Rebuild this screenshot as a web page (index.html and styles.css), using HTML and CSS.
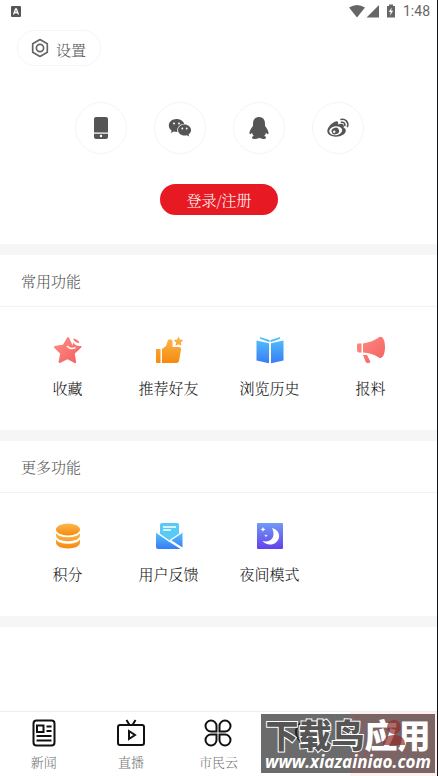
FILE: index.html
```html
<!DOCTYPE html>
<html lang="zh-CN">
<head>
<meta charset="utf-8">
<meta name="viewport" content="width=device-width, initial-scale=1">
<title>我的</title>
<link rel="stylesheet" href="styles.css">
</head>
<body>
<div class="app">
  <header class="status">
    <svg width="10" height="11" viewBox="0 0 10 11"><rect width="10" height="11" rx="1" fill="#555"/><path d="M2.5 8.500 4.600 3h.8l2.100 5.500M3.500 6.500h3" fill="none" stroke="#fff" stroke-width="1.300"/></svg>
    <div class="status-right">
      <svg width="48" height="14" viewBox="0 0 48 14" fill="#666"><path d="M0 3.500Q8 -1.500 16 3.500L8 13.500zM17.500 13.500 30 1v12.500zM38 2h2V.5h4V2h2v11.500h-8z"/><path d="m42.700 3.500-3 4.500h2l-.8 3.800 3.300-5h-2z" fill="#fff"/></svg>
      <span>1:48</span>
    </div>
  </header>
  <main>
    <section class="profile">
      <button class="settings" type="button">
        <svg width="18" height="20" viewBox="0 0 18 20" fill="none" stroke="#666" stroke-width="1.700" stroke-linejoin="round"><path d="m9 1.500 7.300 4.300v8.400L9 18.500l-7.300-4.300V5.800z"/><circle cx="9" cy="10" r="3.600"/></svg>
        <span>设置</span>
      </button>
      <div class="logins">
        <button type="button" aria-label="手机"><svg width="24" height="24" viewBox="0 0 24 24" fill="#555"><path d="M7 1h10q2 0 2 2v13.500H5V3q0-2 2-2zM5 17.700h14V21q0 2-2 2H7q-2 0-2-2z"/><circle cx="12" cy="20" r="1.200" fill="#fff"/></svg></button>
        <button type="button" aria-label="微信"><svg width="24" height="24" viewBox="0 0 24 24" fill="#555"><path d="M8.500 3C4 3 .8 5.900.8 9.500c0 2 1 3.800 2.800 5l-.7 2.500 2.900-1.500q1.700.5 3.500.4A6.500 6.500 0 0 1 16.300 8C15.500 5.200 12.500 3 8.500 3z"/><path d="M16.500 8.500c-3.700 0-6.500 2.500-6.500 5.500s2.800 5.500 6.500 5.500q1.200 0 2.200-.3l2.500 1.400-.6-2.200c1.500-1 2.500-2.600 2.500-4.400 0-3-3-5.500-6.600-5.500z"/><g fill="#fff"><circle cx="6" cy="7.500" r="1"/><circle cx="11" cy="7.500" r="1"/><circle cx="14.300" cy="12.500" r=".9"/><circle cx="18.700" cy="12.500" r=".9"/></g></svg></button>
        <button type="button" aria-label="QQ"><svg width="24" height="24" viewBox="0 0 24 24" fill="#555"><path d="M12 1c-4.300 0-6 3-6 6.500v2.300c-1.500 2.200-4 5.800-3.500 7.700.4 1.300 1.500.5 2.500-.8q.4 2 1.800 3.400C5.500 20.500 5 21 5 21.700c0 1.800 5.500 1.600 7 .1 1.500 1.500 7 1.700 7-.1 0-.7-.5-1.200-1.800-1.600q1.400-1.400 1.800-3.400c1 1.300 2.100 2.100 2.500.8.500-1.900-2-5.500-3.500-7.700V7.500C18 4 16.300 1 12 1z"/></svg></button>
        <button type="button" aria-label="微博"><svg width="24" height="24" viewBox="0 0 24 24"><path fill="#555" d="M17.500 11.500c.7-1.700.4-3.200-1-3.600-1.300-.4-3 0-4.500.6.700-2.400-.3-3.600-2.300-3.100-3.800 1-8.400 5.900-8.400 9.600 0 3.600 4.200 5.700 8.500 5.700 6 0 10-3.200 10-6 0-1.700-1-2.700-2.300-3.200z"/><ellipse cx="9.700" cy="14.700" rx="6.500" ry="4.500" transform="rotate(-8 9.700 14.700)" fill="#fff"/><ellipse cx="9.300" cy="15" rx="3.800" ry="3.300" transform="rotate(-20 9.300 15)" fill="#555"/><circle cx="8.200" cy="15.800" r="1.200" fill="#fff"/><path d="M15 3.500c4-1 8 2.500 6.500 7M15.500 6.300c2.200-.4 3.800 1.300 3.300 3.200" fill="none" stroke="#555" stroke-width="1.600" stroke-linecap="round"/></svg></button>
      </div>
      <button class="login" type="button">登录/注册</button>
    </section>

    <section class="group">
      <h2>常用功能</h2>
      <div class="grid">
        <a href="#"><svg width="28" height="28" viewBox="0 0 28 28"><defs><linearGradient id="r" x1="0" y1="0" x2="1" y2="1"><stop stop-color="#ff8d85"/><stop offset="1" stop-color="#f35f5f"/></linearGradient></defs><path fill="url(#r)" stroke="url(#r)" stroke-width="2" stroke-linejoin="round" d="m14 2 3.500 7.500 9 1.200-6.800 6.500 1.400 9-7.600-4.100L5.600 26l1.600-8.600L1 11l8.700-1.400z"/><path d="M13 10q3.500 4 8.500 1.500" fill="none" stroke="#fff" stroke-width="1.500"/><path d="M17 0h11v10h-5q-5-2-6-8z" fill="#fff"/><path d="M19 2.500q5 .5 6.500 4.500-4.500 0-6.500-4.500zM19 6.500l3 3 5 .7-2 2.300-6-3z" fill="#f87470"/></svg><span>收藏</span></a>
        <a href="#"><svg width="28" height="28" viewBox="0 0 28 28"><defs><linearGradient id="o" x1="0" y1="0" x2="0" y2="1"><stop stop-color="#fdb74c"/><stop offset="1" stop-color="#f58a10"/></linearGradient></defs><path fill="url(#o)" d="M1 13h4.500v14H2q-1 0-1-1zM7 13l4-3 2-6q3-2 4.500 1v6h7q1.700.5 1.500 2.500l-2 11.500q-.4 2-2.500 2H7zM23.500.5l1.500 3 3.300.5-2.400 2.400.6 3.400-3-1.600-3 1.600.6-3.400L18.700 4l3.300-.5z"/></svg><span>推荐好友</span></a>
        <a href="#"><svg width="28" height="28" viewBox="0 0 28 28"><defs><linearGradient id="b" x1="0" y1="0" x2="0" y2="1"><stop stop-color="#54c5fb"/><stop offset="1" stop-color="#397bf6"/></linearGradient></defs><path fill="url(#b)" d="M.5 4.500 13 7.300v20L.5 24.500zM15 7.300l12.500-2.800v20L15 27.300zM4 1l9.500 3v2.200L4 2.800zM24 1l-9.500 3v2.200L24 2.800z"/></svg><span>浏览历史</span></a>
        <a href="#"><svg width="28" height="28" viewBox="0 0 28 28"><path fill="url(#r)" d="M1 7.500h3.500v9H2Q0 16.500 0 13V9q0-1.500 1-1.500zM6 7.500Q15 6 21 2c3-3 7-.5 7 9s-4 13-7 10q-6-4-15-4.500zM6 19h4l3.500 7q-3 2.500-5-.5z"/></svg><span>报料</span></a>
      </div>
    </section>

    <section class="group">
      <h2>更多功能</h2>
      <div class="grid">
        <a href="#"><svg width="28" height="28" viewBox="0 0 28 28"><g fill="url(#o)"><ellipse cx="14" cy="7.500" rx="12" ry="6"/><path d="M2 11q2 4 12 4.300Q24 15 26 11v3q-1 5-12 5.200Q3 19 2 14zM2 17.500q2 4 12 4.300 10-.3 12-4.300v3.700q-1 5-12 5.300-11-.3-12-5.300z"/></g></svg><span>积分</span></a>
        <a href="#"><svg width="28" height="28" viewBox="0 0 28 28"><path fill="#59caf6" d="M7 1h15q2 0 2 2v10l-9 6L5 12V3q0-2 2-2z"/><path d="M8 5h13M8 8h8" stroke="#fff" stroke-width="1.500"/><path fill="url(#b)" d="m1 10 13 9 12 8H3q-2 0-2-2zM27.500 10v15.500L16 18z"/><path d="m1 10 13 9 13 8M27.500 10 15 18.500" fill="none" stroke="#fff" stroke-width="1.300"/></svg><span>用户反馈</span></a>
        <a href="#"><svg width="28" height="28" viewBox="0 0 28 28"><defs><linearGradient id="p" x1="0" y1="0" x2="0" y2="1"><stop stop-color="#6f9bf3"/><stop offset="1" stop-color="#6540ed"/></linearGradient></defs><rect x="1" y="1" width="26" height="26" rx="1" fill="url(#p)"/><path fill="#fff" d="M16 6c8 2 9 10 4.500 14s-11 3-14-1c8 2 14-4 9.500-13zM7 5l.7 1.500L9.500 7.500l-1.800.7L7 10l-.7-1.800-1.800-.7 1.800-1zM10 12l.5 1.200 1.300.6-1.300.5L10 15.500l-.5-1.200-1.300-.5 1.300-.6z"/></svg><span>夜间模式</span></a>
      </div>
    </section>
    <div class="band"></div>
  </main>

  <nav class="tabs">
    <a href="#"><svg width="28" height="28" viewBox="0 0 28 28" fill="none" stroke="#111" stroke-width="2"><rect x="3.500" y="1.500" width="21" height="25" rx="3"/><path d="M7 6.500h6.500v6.500H7zM16.500 7.500h5M16.500 12h5M6.500 17h15M6.500 21.500h15"/></svg><span>新闻</span></a>
    <a href="#"><svg width="28" height="28" viewBox="0 0 28 28" fill="none" stroke="#111" stroke-width="2"><rect x="1" y="6" width="26" height="20" rx="2"/><path d="m9.500 1 3 5M18.500 1l-3 5M12 12v8l6-4z"/></svg><span>直播</span></a>
    <a href="#"><svg width="28" height="28" viewBox="0 0 28 28" fill="none" stroke="#111" stroke-width="2"><path d="M12.500 12.500H7a5.500 5.500 0 1 1 5.500-5.500zM15.500 12.500V7a5.500 5.500 0 1 1 5.500 5.500zM12.500 15.500V21A5.500 5.500 0 1 1 7 15.500zM15.500 15.500H21a5.500 5.500 0 1 1-5.500 5.500z"/></svg><span>市民云</span></a>
    <a href="#" aria-label="服务"><svg width="28" height="28" viewBox="0 0 28 28" fill="none" stroke="#111" stroke-width="2"><circle cx="14" cy="14" r="11.500"/><path d="M5 8q9-2 17 12M12 3q8 3 12 9"/></svg></a>
    <a href="#" class="current" aria-label="我的"><svg width="28" height="28" viewBox="0 0 28 28" fill="#e71a24"><circle cx="14" cy="7" r="6.500"/><path d="M2 27q0-11 12-11t12 11z"/></svg></a>
  </nav>
  <div class="mark">
    <svg class="mark-under" width="174" height="59" viewBox="0 0 174 59"><path d="M90 0h84v59H90z" fill="#7a6464"/><g fill="none" stroke="#222" stroke-width="2"><circle cx="46" cy="18" r="11"/><path d="M36 13q11-2 20 10M43 7q9 3 13 9"/></g></svg>
    <div class="mark-name"><span class="outlined">下载鸟</span><span>应用</span></div>
    <svg class="mark-person" width="28" height="30" viewBox="0 0 28 30" fill="#8e2e2d"><circle cx="14" cy="8" r="7"/><path d="M3 26q0-10 11-10t11 10z"/></svg>
    <div class="mark-url">www.xiazainiao.com</div>
  </div>
</div>
</body>
</html>
```
FILE: styles.css
```css
* { box-sizing: border-box; }
body {
  margin: 0;
  background: #fff;
  font-family: "Noto Serif CJK SC", "Noto Sans CJK SC", serif;
  font-weight: 300;
  font-size: 15px;
  line-height: 20px;
  color: #111;
}
svg { display: block; flex: none; }
a { color: inherit; text-decoration: none; }
button { font: inherit; color: inherit; padding: 0; cursor: pointer; }
.app {
  position: relative;
  min-height: 100vh;
  display: flex;
  flex-direction: column;
  border-right: 1px solid #10131a;
}
main { flex: 1; }
.status {
  display: flex;
  justify-content: space-between;
  align-items: center;
  height: 22px;
  padding: 0 7px 0 11px;
}
.status-right {
  display: flex;
  align-items: center;
  gap: 6px;
  font: 14px/20px Roboto, sans-serif;
  color: #666;
}
.profile {
  display: flex;
  flex-direction: column;
  align-items: center;
  padding: 8px 16px 29px 17px;
}
.settings {
  align-self: flex-start;
  display: flex;
  align-items: center;
  gap: 7px;
  height: 36px;
  padding: 0 14px 0 13px;
  border: 1px solid #f5f5f5;
  border-radius: 18px;
  background: #fff;
  color: #555;
}
.settings span { padding-top: 4px; }
.logins {
  display: flex;
  gap: 27px;
  margin: 36px 0 30px;
}
.logins button {
  display: grid;
  place-items: center;
  width: 52px;
  height: 52px;
  border: 1px solid #f5f5f5;
  border-radius: 50%;
  background: #fff;
}
.login {
  width: 118px;
  height: 31px;
  border: 0;
  border-radius: 16px;
  background: #e71a24;
  color: #fff;
}
.group { border-top: 11px solid #f6f6f6; }
.group h2 {
  margin: 0;
  padding: 16px 21px 15px;
  border-bottom: 1px solid #f3f3f3;
  font-size: 15px;
  font-weight: 300;
  color: #555;
}
.grid {
  display: grid;
  grid-template-columns: repeat(4, 1fr);
  padding: 29px 16px 32px 17px;
}
.grid a {
  display: flex;
  flex-direction: column;
  align-items: center;
  gap: 14px;
}
.band { height: 11px; background: #f6f6f6; }
.tabs {
  display: grid;
  grid-template-columns: repeat(5, 1fr);
  height: 65px;
  border-top: 1px solid #eee;
  font-size: 13px;
  color: #777;
}
.tabs a {
  display: flex;
  flex-direction: column;
  align-items: center;
  gap: 5px;
  padding-top: 7px;
}
.tabs .current { background: #fff0f0; }
.mark {
  position: absolute;
  right: 2px;
  bottom: 3px;
  width: 174px;
  height: 59px;
  background: #6b6b6b;
  color: #fff;
  text-align: center;
  white-space: nowrap;
}
.mark-under { position: absolute; left: 0; top: 0; }
.mark-person { position: absolute; right: 27px; top: 5px; opacity: 0.7; }
.mark-name {
  position: relative;
  font: 900 33px/40px "Noto Sans CJK SC", sans-serif;
}
.outlined {
  color: #555;
  -webkit-text-stroke: 2px #fff;
  paint-order: stroke fill;
}
.mark-url {
  position: relative;
  font: italic 700 17px/16px "Open Sans", sans-serif;
}
```
